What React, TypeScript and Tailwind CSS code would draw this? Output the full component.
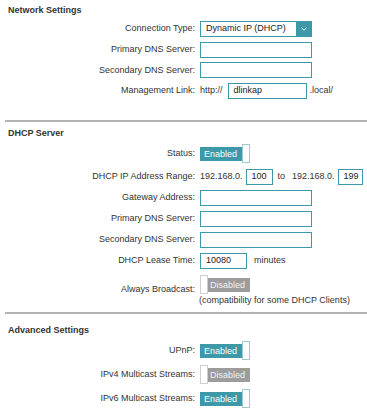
import React from 'react';

const teal = 'bg-[#3d98a7]';

function Row({ label, children, tall }: { label: string; children: React.ReactNode; tall?: boolean }) {
  return (
    <div className={`flex items-center ${tall ? '' : 'h-[16px]'}`}>
      <div className="w-[196px] text-right pr-[1px] shrink-0">{label}</div>
      <div className="ml-[4px] flex items-center">{children}</div>
    </div>
  );
}

function TextBox({ value = '', w = 'w-[112px]' }: { value?: string; w?: string }) {
  return (
    <div className={`${w} h-[16px] border border-[#3d98a7] bg-white flex items-center pl-[5px] text-[#222]`}>
      {value}
    </div>
  );
}

function Toggle({ on }: { on: boolean }) {
  if (on) {
    return (
      <div className="flex items-center h-[19px]">
        <div className={`${teal} h-[14px] w-[42px] text-white leading-[14px] pl-[4px]`}>Enabled</div>
        <div className="h-[19px] w-[8px] border border-[#9ccbd2] bg-white"></div>
      </div>
    );
  }
  return (
    <div className="flex items-center h-[19px]">
      <div className="h-[19px] w-[8px] border border-[#cfcfcf] bg-white"></div>
      <div className="bg-[#9c9c9c] h-[14px] w-[42px] text-[#f2f2f2] leading-[14px] pl-[2px]">Disabled</div>
    </div>
  );
}

function Header({ title }: { title: string }) {
  return <div className="pl-[8px] font-bold leading-[11px] text-[#333]">{title}</div>;
}

function Divider() {
  return <div className="ml-[5px] h-[2px] bg-[#b3b3b3]"></div>;
}

export default function App() {
  return (
    <div
      className="w-[367px] h-[411px] bg-white text-[9px] text-[#333] overflow-hidden"
      style={{ fontFamily: '"Liberation Sans", Arial, sans-serif' }}
    >
      {/* Network Settings */}
      <div className="pt-[5px]">
        <Header title="Network Settings" />
        <div className="mt-[5px] flex flex-col gap-[4.7px]">
          <Row label="Connection Type:">
            <div className="w-[112px] h-[16px] border border-[#3d98a7] bg-white flex items-center text-[#222]">
              <span className="flex-1 pl-[5px]">Dynamic IP (DHCP)</span>
              <span className={`${teal} w-[15px] h-full flex items-center justify-center`}>
                <svg width="6" height="4" viewBox="0 0 6 4" fill="none">
                  <path d="M0.5 0.8l2.5 2.4L5.5 0.8" stroke="white" strokeWidth="1" />
                </svg>
              </span>
            </div>
          </Row>
          <Row label="Primary DNS Server:">
            <TextBox />
          </Row>
          <Row label="Secondary DNS Server:">
            <TextBox />
          </Row>
          <Row label="Management Link:">
            <span>http://</span>
            <div className="ml-[5px]">
              <TextBox value="dlinkap" w="w-[79px]" />
            </div>
            <span className="ml-[3px]">.local/</span>
          </Row>
        </div>
      </div>

      <div className="mt-[21px]">
        <Divider />
      </div>

      {/* DHCP Server */}
      <div className="pt-[6px]">
        <Header title="DHCP Server" />
        <div className="mt-[5px] flex flex-col">
          <Row label="Status:" tall>
            <Toggle on />
          </Row>
          <div className="mt-[6px]">
            <Row label="DHCP IP Address Range:">
              <span>192.168.0.</span>
              <div className="ml-[3px]">
                <TextBox value="100" w="w-[27px]" />
              </div>
              <span className="ml-[5px]">to</span>
              <span className="ml-[7px]">192.168.0.</span>
              <div className="ml-[3px]">
                <TextBox value="199" w="w-[25px]" />
              </div>
            </Row>
          </div>
          <div className="mt-[5px] flex flex-col gap-[5px]">
            <Row label="Gateway Address:">
              <TextBox />
            </Row>
            <Row label="Primary DNS Server:">
              <TextBox />
            </Row>
            <Row label="Secondary DNS Server:">
              <TextBox />
            </Row>
            <Row label="DHCP Lease Time:">
              <TextBox value="10080" w="w-[47px]" />
              <span className="ml-[7px]">minutes</span>
            </Row>
            <Row label="Always Broadcast:" tall>
              <div className="flex flex-col pt-[1px]">
                <Toggle on={false} />
                <div className="leading-[12px] -ml-[1px]">(compatibility for some DHCP Clients)</div>
              </div>
            </Row>
          </div>
        </div>
      </div>

      <div className="mt-[6px]">
        <Divider />
      </div>

      {/* Advanced Settings */}
      <div className="pt-[11px]">
        <Header title="Advanced Settings" />
        <div className="mt-[5px] flex flex-col gap-[5px]">
          <Row label="UPnP:" tall>
            <Toggle on />
          </Row>
          <Row label="IPv4 Multicast Streams:" tall>
            <Toggle on={false} />
          </Row>
          <Row label="IPv6 Multicast Streams:" tall>
            <Toggle on />
          </Row>
        </div>
      </div>
    </div>
  );
}
